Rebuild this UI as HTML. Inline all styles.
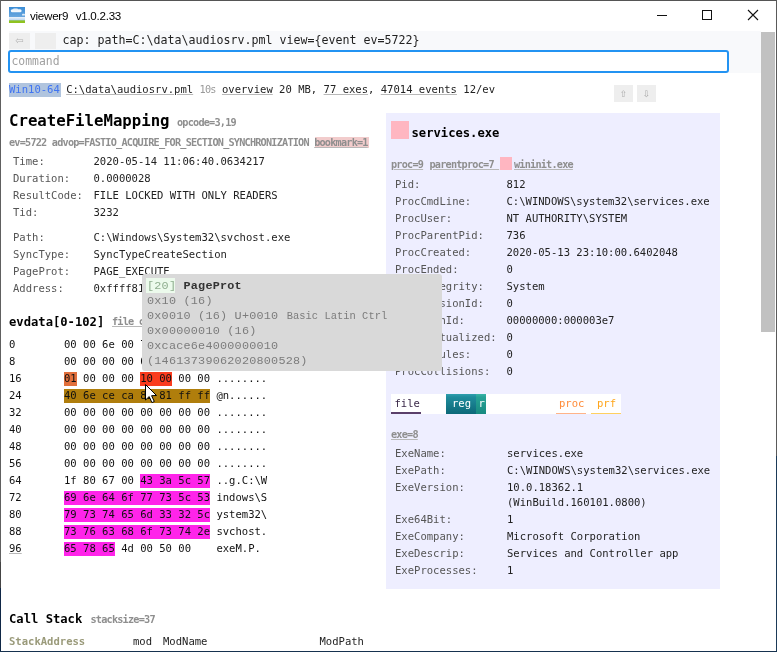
<!DOCTYPE html>
<html lang="en"><head><meta charset="utf-8"><title>viewer9 v1.0.2.33</title>
<style>
html,body{margin:0;padding:0}
body{width:777px;height:652px;overflow:hidden;background:#fff;position:relative;font-family:"DejaVu Sans Mono","Liberation Mono",monospace;color:#222}
.wrap{position:absolute;left:0;top:0;width:777px;height:652px;will-change:transform}
.r{position:absolute}
.t{position:absolute;white-space:pre;color:#222}
.b,.lb{font-size:10.55px;line-height:17px;letter-spacing:0}
.lb{color:#555}
.s{font-size:10.2px;line-height:14px;letter-spacing:-0.78px;font-weight:bold;color:#8e8e8e}
.sm{font-size:10.2px;letter-spacing:-0.78px;color:#999}
.h1{font-size:15.7px;line-height:22px;font-weight:bold;color:#000}
.h2{font-size:12.18px;line-height:18px;font-weight:bold;color:#000}
.tb{font-size:11.63px;line-height:17px;color:#222}
.tt{font-family:"Liberation Mono",monospace;font-size:11.8px;line-height:15px;letter-spacing:0.22px;color:#7c7c7c}
.tt b{color:#333}
.tts{font-size:10.4px;letter-spacing:0.05px;margin-left:1px}
.w10{color:#3f74f2}
u{text-underline-offset:1px;text-decoration-color:#b8b8b8;text-decoration-thickness:1px}
.title{font-family:"Liberation Sans",sans-serif;font-size:11.6px;line-height:16px;color:#000;letter-spacing:-0.26px;word-spacing:0.8px}
.inp{position:absolute;left:8px;top:50px;width:721px;height:23px;box-sizing:border-box;border:2px solid #2393f2;border-radius:3px;background:#fff}
.inp span{position:absolute;left:1.5px;top:0.5px;font-size:11.4px;line-height:17px;color:#a0a0a0}
.tip{position:absolute;left:142px;top:274px;width:300px;height:97px;background:#d9d9d9;border-radius:3px}
.frame{position:absolute;left:0;top:0;width:777px;height:652px;pointer-events:none}
.frame i{position:absolute;display:block}
</style></head>
<body>
<div class="wrap">
<div class="r" style="left:9px;top:31px;width:752px;height:42px;background:#f8f9fb;"></div>
<div class="r" style="left:9px;top:33px;width:21px;height:16px;background:#eeeeee;"></div>
<div class="r" style="left:35px;top:33px;width:21px;height:16px;background:#eeeeee;"></div>
<div class="t" style="left:9px;top:33px;width:21px;height:16px;line-height:15px;text-align:center;font-family:'DejaVu Sans',sans-serif;font-size:10px;color:#b0b0b0">&#8678;</div>
<div class="t tb " style="left:62.5px;top:32.00px;">cap: path=C:\data\audiosrv.pml view={event ev=5722}</div>
<div class="inp"><span>command</span></div>
<div class="r" style="left:9px;top:83px;width:51.5px;height:14px;background:#b0c4de;"></div>
<div class="t b " style="left:9px;top:81.00px;"><span class="w10">Win10-64</span> <u>C:\data\audiosrv.pml</u> <span class="sm">10s</span> <u>overview</u> 20 MB, <u>77 exes</u>, <u>47014 events</u> 12/ev</div>
<div class="r" style="left:614px;top:85px;width:19px;height:17px;background:#eeeeee;"></div>
<div class="t" style="left:614px;top:85px;width:19px;height:17px;line-height:18px;text-align:center;font-family:'DejaVu Sans',sans-serif;font-size:9px;color:#aaa">&#8679;</div>
<div class="r" style="left:637px;top:85px;width:19px;height:17px;background:#eeeeee;"></div>
<div class="t" style="left:637px;top:85px;width:19px;height:17px;line-height:18px;text-align:center;font-family:'DejaVu Sans',sans-serif;font-size:9px;color:#aaa">&#8681;</div>
<div class="t h1 " style="left:9px;top:110.00px;">CreateFileMapping</div>
<div class="t s " style="left:177px;top:116.00px;">opcode=3,19</div>
<div class="r" style="left:315px;top:137px;width:53.5px;height:11px;background:#f2cccc;"></div>
<div class="t s " style="left:9px;top:136.00px;">ev=5722 advop=FASTIO_ACQUIRE_FOR_SECTION_SYNCHRONIZATION <u>bookmark=1</u></div>
<div class="t lb " style="left:13px;top:153.00px;">Time:</div>
<div class="t b " style="left:93.5px;top:153.00px;">2020-05-14 11:06:40.0634217</div>
<div class="t lb " style="left:13px;top:170.00px;">Duration:</div>
<div class="t b " style="left:93.5px;top:170.00px;">0.0000028</div>
<div class="t lb " style="left:13px;top:187.00px;">ResultCode:</div>
<div class="t b " style="left:93.5px;top:187.00px;">FILE LOCKED WITH ONLY READERS</div>
<div class="t lb " style="left:13px;top:204.00px;">Tid:</div>
<div class="t b " style="left:93.5px;top:204.00px;">3232</div>
<div class="t lb " style="left:13px;top:229.00px;">Path:</div>
<div class="t b " style="left:93.5px;top:229.00px;">C:\Windows\System32\svchost.exe</div>
<div class="t lb " style="left:13px;top:246.00px;">SyncType:</div>
<div class="t b " style="left:93.5px;top:246.00px;">SyncTypeCreateSection</div>
<div class="t lb " style="left:13px;top:263.00px;">PageProt:</div>
<div class="t b " style="left:93.5px;top:263.00px;">PAGE_EXECUTE</div>
<div class="t lb " style="left:13px;top:280.00px;">Address:</div>
<div class="t b " style="left:93.5px;top:280.00px;">0xffff8100ca6e4000</div>
<div class="t h2 " style="left:9px;top:313.00px;">evdata[0-102]</div>
<div class="t s " style="left:112px;top:315.00px;"><u>file create</u></div>
<div class="r" style="left:63.5px;top:372px;width:13.2px;height:14px;background:#e2703c;"></div>
<div class="r" style="left:139.7px;top:372px;width:32.25px;height:14px;background:#fa3c1e;"></div>
<div class="r" style="left:63.5px;top:389px;width:146.55px;height:14px;background:#b07e0c;"></div>
<div class="r" style="left:139.7px;top:474px;width:70.35px;height:14px;background:#ff24ea;"></div>
<div class="r" style="left:63.5px;top:491px;width:146.55px;height:14px;background:#ff24ea;"></div>
<div class="r" style="left:63.5px;top:508px;width:146.55px;height:14px;background:#ff24ea;"></div>
<div class="r" style="left:63.5px;top:525px;width:146.55px;height:14px;background:#ff24ea;"></div>
<div class="r" style="left:63.5px;top:542px;width:51.3px;height:14px;background:#ff24ea;"></div>
<div class="t b " style="left:9px;top:336.00px;color:#111">0</div>
<div class="t b " style="left:64px;top:336.00px;color:#111">00 00 6e 00 70 00 00 00</div>
<div class="t b " style="left:216.4px;top:336.00px;color:#111">..n.p...</div>
<div class="t b " style="left:9px;top:353.00px;color:#111">8</div>
<div class="t b " style="left:64px;top:353.00px;color:#111">00 00 00 00 00 00 00 00</div>
<div class="t b " style="left:216.4px;top:353.00px;color:#111">........</div>
<div class="t b " style="left:9px;top:370.00px;color:#111">16</div>
<div class="t b " style="left:64px;top:370.00px;color:#111">01 00 00 00 10 00 00 00</div>
<div class="t b " style="left:216.4px;top:370.00px;color:#111">........</div>
<div class="t b " style="left:9px;top:387.00px;color:#111">24</div>
<div class="t b " style="left:64px;top:387.00px;color:#111">40 6e ce ca 81 81 ff ff</div>
<div class="t b " style="left:216.4px;top:387.00px;color:#111">@n......</div>
<div class="t b " style="left:9px;top:404.00px;color:#111">32</div>
<div class="t b " style="left:64px;top:404.00px;color:#111">00 00 00 00 00 00 00 00</div>
<div class="t b " style="left:216.4px;top:404.00px;color:#111">........</div>
<div class="t b " style="left:9px;top:421.00px;color:#111">40</div>
<div class="t b " style="left:64px;top:421.00px;color:#111">00 00 00 00 00 00 00 00</div>
<div class="t b " style="left:216.4px;top:421.00px;color:#111">........</div>
<div class="t b " style="left:9px;top:438.00px;color:#111">48</div>
<div class="t b " style="left:64px;top:438.00px;color:#111">00 00 00 00 00 00 00 00</div>
<div class="t b " style="left:216.4px;top:438.00px;color:#111">........</div>
<div class="t b " style="left:9px;top:455.00px;color:#111">56</div>
<div class="t b " style="left:64px;top:455.00px;color:#111">00 00 00 00 00 00 00 00</div>
<div class="t b " style="left:216.4px;top:455.00px;color:#111">........</div>
<div class="t b " style="left:9px;top:472.00px;color:#111">64</div>
<div class="t b " style="left:64px;top:472.00px;color:#111">1f 80 67 00 43 3a 5c 57</div>
<div class="t b " style="left:216.4px;top:472.00px;color:#111">..g.C:\W</div>
<div class="t b " style="left:9px;top:489.00px;color:#111">72</div>
<div class="t b " style="left:64px;top:489.00px;color:#111">69 6e 64 6f 77 73 5c 53</div>
<div class="t b " style="left:216.4px;top:489.00px;color:#111">indows\S</div>
<div class="t b " style="left:9px;top:506.00px;color:#111">80</div>
<div class="t b " style="left:64px;top:506.00px;color:#111">79 73 74 65 6d 33 32 5c</div>
<div class="t b " style="left:216.4px;top:506.00px;color:#111">ystem32\</div>
<div class="t b " style="left:9px;top:523.00px;color:#111">88</div>
<div class="t b " style="left:64px;top:523.00px;color:#111">73 76 63 68 6f 73 74 2e</div>
<div class="t b " style="left:216.4px;top:523.00px;color:#111">svchost.</div>
<div class="t b " style="left:9px;top:540.00px;color:#111"><u>96</u></div>
<div class="t b " style="left:64px;top:540.00px;color:#111">65 78 65 4d 00 50 00</div>
<div class="t b " style="left:216.4px;top:540.00px;color:#111">exeM.P.</div>
<div class="t h2 " style="left:9px;top:610.00px;">Call Stack</div>
<div class="t s " style="left:90.5px;top:613.00px;">stacksize=37</div>
<div class="t b " style="left:9px;top:633.00px;font-weight:bold;color:#9a9a7a">StackAddress</div>
<div class="t b " style="left:133px;top:633.00px;">mod</div>
<div class="t b " style="left:163px;top:633.00px;">ModName</div>
<div class="t b " style="left:319.5px;top:633.00px;">ModPath</div>
<div class="r" style="left:386px;top:113px;width:334px;height:475.5px;background:#eeeeff;"></div>
<div class="r" style="left:391px;top:121px;width:18px;height:18px;background:#ffb6c1;"></div>
<div class="t h2 " style="left:411.5px;top:124.00px;">services.exe</div>
<div class="r" style="left:500px;top:157px;width:12px;height:12.5px;background:#ffb6c1;"></div>
<div class="t s " style="left:391px;top:158.00px;"><u>proc=9</u></div>
<div class="t s " style="left:429.5px;top:158.00px;"><u>parentproc=7 </u></div>
<div class="t s " style="left:514px;top:158.00px;"><u>wininit.exe</u></div>
<div class="t lb " style="left:395px;top:176.00px;">Pid:</div>
<div class="t b " style="left:506.5px;top:176.00px;">812</div>
<div class="t lb " style="left:395px;top:193.00px;">ProcCmdLine:</div>
<div class="t b " style="left:506.5px;top:193.00px;">C:\WINDOWS\system32\services.exe</div>
<div class="t lb " style="left:395px;top:210.00px;">ProcUser:</div>
<div class="t b " style="left:506.5px;top:210.00px;">NT AUTHORITY\SYSTEM</div>
<div class="t lb " style="left:395px;top:227.00px;">ProcParentPid:</div>
<div class="t b " style="left:506.5px;top:227.00px;">736</div>
<div class="t lb " style="left:395px;top:244.00px;">ProcCreated:</div>
<div class="t b " style="left:506.5px;top:244.00px;">2020-05-13 23:10:00.6402048</div>
<div class="t lb " style="left:395px;top:261.00px;">ProcEnded:</div>
<div class="t b " style="left:506.5px;top:261.00px;">0</div>
<div class="t lb " style="left:395px;top:278.00px;">ProcIntegrity:</div>
<div class="t b " style="left:506.5px;top:278.00px;">System</div>
<div class="t lb " style="left:395px;top:295.00px;">ProcSessionId:</div>
<div class="t b " style="left:506.5px;top:295.00px;">0</div>
<div class="t lb " style="left:395px;top:312.00px;">ProcAuthId:</div>
<div class="t b " style="left:506.5px;top:312.00px;">00000000:000003e7</div>
<div class="t lb " style="left:395px;top:329.00px;">ProcVirtualized:</div>
<div class="t b " style="left:506.5px;top:329.00px;">0</div>
<div class="t lb " style="left:395px;top:346.00px;">ProcModules:</div>
<div class="t b " style="left:506.5px;top:346.00px;">0</div>
<div class="t lb " style="left:395px;top:363.00px;">ProcCollisions:</div>
<div class="t b " style="left:506.5px;top:363.00px;">0</div>
<div class="r" style="left:391px;top:394px;width:230px;height:20px;background:#ffffff;"></div>
<div class="r" style="left:391px;top:412px;width:30px;height:2px;background:#5a3f6a;"></div>
<div class="t b " style="left:394.5px;top:395.00px;color:#3a2848">file</div>
<div class="r" style="left:446px;top:394px;width:30px;height:20px;background:linear-gradient(#2f9fae 0,#1f8c9c 15%,#0c6878 100%);"></div>
<div class="r" style="left:476px;top:394px;width:10px;height:20px;background:linear-gradient(#3bb5a8 0,#27a296 15%,#178a80 100%);"></div>
<div class="t b " style="left:452px;top:395.00px;color:#fff">reg</div>
<div class="t b " style="left:478.5px;top:395.00px;color:#fff">r</div>
<div class="r" style="left:556px;top:413px;width:30px;height:1px;background:#ffb488;"></div>
<div class="r" style="left:591px;top:413px;width:30px;height:1px;background:#ffd060;"></div>
<div class="t b " style="left:559px;top:395.00px;color:#ff8c3a">proc</div>
<div class="t b " style="left:597px;top:395.00px;color:#ffa51a">prf</div>
<div class="t s " style="left:391px;top:428.00px;"><u>exe=8</u></div>
<div class="t lb " style="left:395px;top:445.00px;">ExeName:</div>
<div class="t b " style="left:507px;top:445.00px;">services.exe</div>
<div class="t lb " style="left:395px;top:462.00px;">ExePath:</div>
<div class="t b " style="left:507px;top:462.00px;">C:\WINDOWS\system32\services.exe</div>
<div class="t lb " style="left:395px;top:479.00px;">ExeVersion:</div>
<div class="t b " style="left:507px;top:479.00px;">10.0.18362.1</div>
<div class="t b " style="left:507px;top:494.00px;">(WinBuild.160101.0800)</div>
<div class="t lb " style="left:395px;top:511.00px;">Exe64Bit:</div>
<div class="t b " style="left:507px;top:511.00px;">1</div>
<div class="t lb " style="left:395px;top:528.00px;">ExeCompany:</div>
<div class="t b " style="left:507px;top:528.00px;">Microsoft Corporation</div>
<div class="t lb " style="left:395px;top:545.00px;">ExeDescrip:</div>
<div class="t b " style="left:507px;top:545.00px;">Services and Controller app</div>
<div class="t lb " style="left:395px;top:562.00px;">ExeProcesses:</div>
<div class="t b " style="left:507px;top:562.00px;">1</div>
<div class="tip"></div>
<div class="r" style="left:146px;top:278px;width:29px;height:15px;background:#ecfaec;"></div>
<div class="t tt " style="left:147px;top:279.00px;"><span style="color:#8fae8f">[20]</span> <b>PageProt</b></div>
<div class="t tt " style="left:147px;top:294.00px;">0x10 (16)</div>
<div class="t tt " style="left:147px;top:309.00px;">0x0010 (16) U+0010 <span class="tts">Basic Latin Ctrl</span></div>
<div class="t tt " style="left:147px;top:324.00px;">0x00000010 (16)</div>
<div class="t tt " style="left:147px;top:339.00px;">0xcace6e4000000010</div>
<div class="t tt " style="left:147px;top:354.00px;">(14613739062020800528)</div>
<svg class="r" style="left:144px;top:383px" width="14" height="21" viewBox="0 0 14 21"><path d="M1.5 1.5 L1.5 17 L5.2 13.6 L7.9 19.6 L10.3 18.5 L7.6 12.7 L12.5 12.5 Z" fill="#fff" stroke="#000" stroke-width="1"/></svg>
<div class="r" style="left:761px;top:32px;width:14px;height:300px;background:#c1c1c1;"></div>
<svg class="r" style="left:9px;top:7px" width="16" height="16" viewBox="0 0 16 16"><defs><linearGradient id="sk" x1="0" y1="0" x2="0" y2="1"><stop offset="0" stop-color="#3a8dd6"/><stop offset="1" stop-color="#86b6e2"/></linearGradient><linearGradient id="cl" x1="0" y1="0" x2="0" y2="1"><stop offset="0" stop-color="#eef4fb"/><stop offset="1" stop-color="#b4d2ee"/></linearGradient></defs><rect width="16" height="16" fill="url(#sk)"/><rect x="1.8" y="2.2" width="10.8" height="3" rx="1.5" fill="#f4f8fc"/><rect x="4" y="1.6" width="5" height="2" rx="1" fill="#e6f0fa"/><rect x="13" y="6.8" width="3" height="1.8" rx=".9" fill="#e3eef9"/><rect y="10" width="16" height="3.6" fill="url(#cl)"/><rect y="13.4" width="16" height="2.6" fill="#8fc31f"/></svg>
<div class="t title" style="left:30px;top:8px">viewer9&nbsp; v1.0.2.33</div>
<svg class="r" style="left:650px;top:1px" width="126" height="30" viewBox="0 0 126 30" fill="none" stroke="#111" stroke-width="1"><path d="M7 14.5 H17"/><rect x="52.5" y="9.5" width="9" height="9"/><path d="M98 9 L108 19 M108 9 L98 19" stroke-width="1.1"/></svg>
</div>
<div class="frame"><i style="left:0;top:0;width:777px;height:1px;background:#555"></i><i style="left:0;top:0;width:1px;height:562px;background:#606060"></i><i style="left:0;top:562px;width:1px;height:26px;background:#444"></i><i style="left:0;top:588px;width:1px;height:64px;background:#0f2746"></i><i style="left:776px;top:0;width:1px;height:456px;background:#5a5a5a"></i><i style="left:776px;top:456px;width:1px;height:196px;background:#1b3a58"></i><i style="left:0;top:651px;width:777px;height:1px;background:#16324f"></i></div>
</body></html>
